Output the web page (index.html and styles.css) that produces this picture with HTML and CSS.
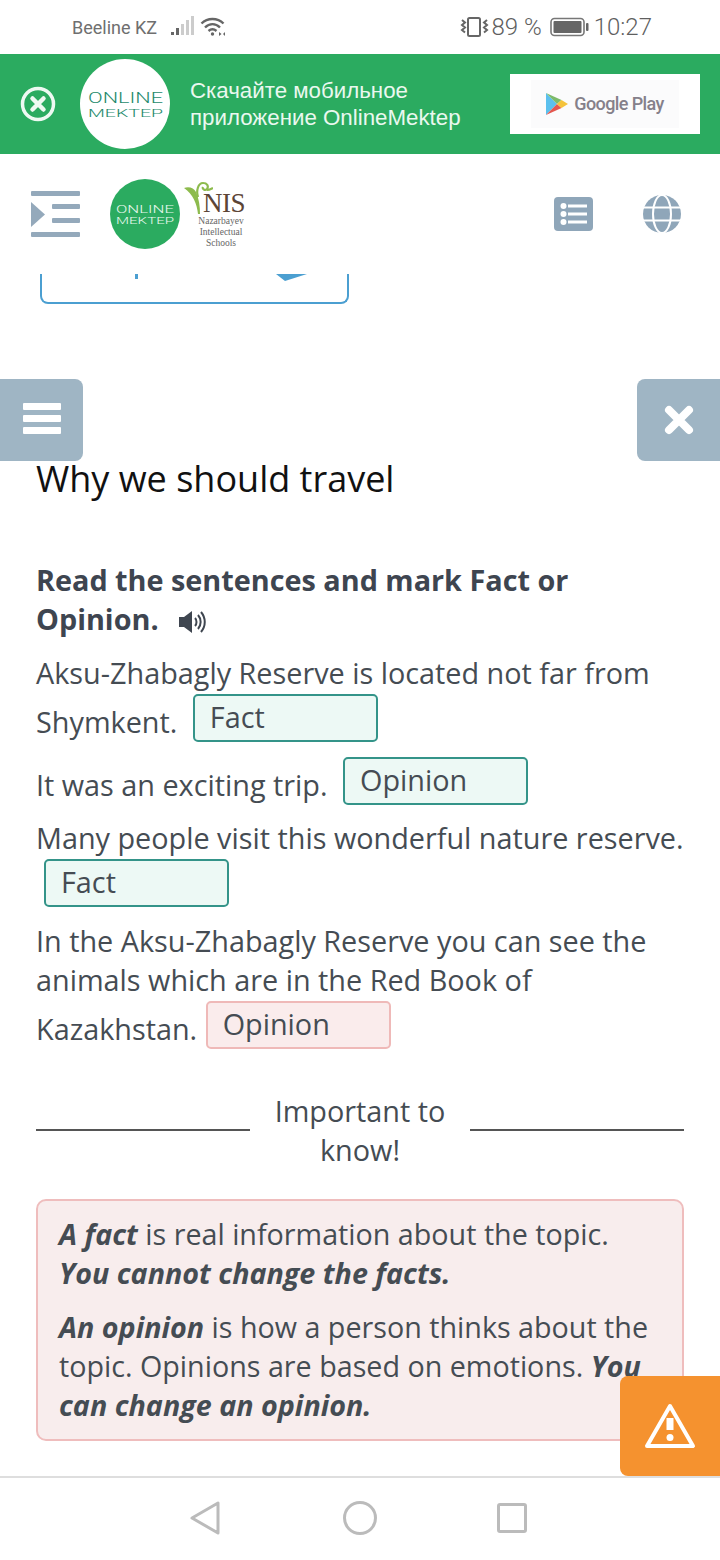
FILE: index.html
```html
<!DOCTYPE html>
<html lang="en">
<head>
<meta charset="utf-8">
<title>Why we should travel</title>
<link rel="stylesheet" href="styles.css">
</head>
<body>
<div class="phone">
  <header class="status">
    <div class="status-left">
      <span class="carrier">Beeline KZ</span>
      <svg class="signal" width="24" height="22" viewBox="0 0 24 22"><rect x="0" y="16" width="3" height="3" fill="#666"/><rect x="5" y="12" width="3" height="7" fill="#666"/><rect x="10" y="8" width="3" height="11" fill="#ccc"/><rect x="15" y="4" width="3" height="15" fill="#ccc"/><rect x="20" y="0" width="3" height="19" fill="#ccc"/></svg>
      <svg class="wifi" width="26" height="22" viewBox="0 0 26 22" fill="none" stroke="#666" stroke-width="2.4"><path d="M1.500 7.500C7.500 1.500 17.500 1.500 23.500 7.500"/><path d="M5 11.500C9.500 7 15.500 7 20 11.500"/><path d="M8.500 15C11 12.800 14 12.800 16.500 15"/><circle cx="12.500" cy="18" r="1.700" fill="#666" stroke="none"/><path d="M19 16l2.500 2-2.500 2zM25 16l-2 2 2 2z" fill="#666" stroke="none"/></svg>
    </div>
    <div class="status-right">
      <svg width="29" height="22" viewBox="0 0 29 22" fill="none" stroke="#666" stroke-width="2"><rect x="8" y="2" width="12" height="18" rx="1.500"/><path d="M2 4l3 2.500-3 2.500 3 2.500-3 2.500 3 2.500M27 4l-3 2.500 3 2.500-3 2.500 3 2.500-3 2.500"/></svg>
      <span class="pct">89 %</span>
      <svg width="40" height="20" viewBox="0 0 40 20"><rect x="1" y="1.500" width="33" height="17" rx="3.500" fill="none" stroke="#777" stroke-width="1.600"/><rect x="3.500" y="4" width="28" height="12" rx="1" fill="#666"/><rect x="36" y="6" width="2.500" height="8" rx="1" fill="#666"/></svg>
      <span class="clock">10:27</span>
    </div>
  </header>

  <section class="banner">
    <svg class="banner-close" width="36" height="36" viewBox="0 0 36 36"><circle cx="18" cy="18" r="15.500" fill="none" stroke="#eef9f2" stroke-width="3.500"/><path d="M12.500 12.500l11 11M23.500 12.500l-11 11" stroke="#eef9f2" stroke-width="4.500" stroke-linecap="round"/></svg>
    <svg class="banner-logo" width="90" height="90" viewBox="0 0 90 90"><circle cx="45" cy="45" r="45" fill="#fff"/><text x="8" y="43.500" textLength="75" lengthAdjust="spacingAndGlyphs" class="logo-a" fill="#1e8a6c">ONLINE</text><text x="8" y="57.500" textLength="75" lengthAdjust="spacingAndGlyphs" class="logo-b" fill="#1e8a6c">MEKTEP</text></svg>
    <p class="banner-text">Скачайте мобильное<br>приложение OnlineMektep</p>
    <div class="store">
      <div class="store-inner">
        <svg width="22" height="24" viewBox="0 0 22 24"><path d="M0 1L11 12 0 23z" fill="#5bc0ee"/><path d="M0 1L15.500 8 11 12z" fill="#7dba6a"/><path d="M0 23L15.500 16 11 12z" fill="#e4574f"/><path d="M15.500 8L22 12l-6.500 4L11 12z" fill="#f5c33b"/></svg>
        <span class="store-name">Google Play</span>
      </div>
    </div>
  </section>

  <nav class="topbar">
    <svg class="burger" width="50" height="48" viewBox="0 0 50 48" fill="#94a9bb"><rect x="1" y="1" width="49" height="5" rx="1"/><rect x="22" y="14" width="28" height="5" rx="1"/><rect x="22" y="28" width="28" height="5" rx="1"/><rect x="1" y="42" width="49" height="5" rx="1"/><path d="M1 12l14 12.500L1 37z"/></svg>
    <svg class="top-logo" width="70" height="70" viewBox="0 0 70 70"><circle cx="35" cy="35" r="35" fill="#2bab60"/><text x="6" y="33.500" textLength="58" lengthAdjust="spacingAndGlyphs" class="logo-c" fill="#e9f9ef">ONLINE</text><text x="6" y="44.500" textLength="58" lengthAdjust="spacingAndGlyphs" class="logo-d" fill="#e9f9ef">MEKTEP</text></svg>
    <div class="nis">
      <svg class="nis-sprout" width="30" height="34" viewBox="0 0 30 34"><path d="M1 7c5-2 10 0 12 4 3 7 4 14 4 22h-2C14 23 10 13 1 7z" fill="#8dbb4d"/><path d="M15 16C13 10 15 2 20 2c4 0 6 3 4 6-2 2-5 0-4-2M24 9c2 0 4-1 6-2" fill="none" stroke="#8dbb4d" stroke-width="2.200"/></svg>
      <span class="nis-mark">NIS</span>
      <span class="nis-sub">Nazarbayev<br>Intellectual<br>Schools</span>
    </div>
    <div class="top-actions">
      <svg width="39" height="34" viewBox="0 0 39 34"><rect width="39" height="34" rx="4" fill="#8fa6b9"/><g fill="#fff"><circle cx="9.500" cy="9" r="3"/><circle cx="9.500" cy="17" r="3"/><circle cx="9.500" cy="25" r="3"/><rect x="14" y="7.500" width="19" height="3"/><rect x="14" y="15.500" width="19" height="3"/><rect x="14" y="23.500" width="19" height="3"/></g></svg>
      <svg width="38" height="38" viewBox="0 0 38 38"><circle cx="19" cy="19" r="19" fill="#8fa6b9"/><g fill="none" stroke="#fff" stroke-width="2"><ellipse cx="19" cy="19" rx="9" ry="19"/><path d="M0 12.500h38M0 25.500h38"/></g></svg>
    </div>
  </nav>

  <main class="content">
    <div class="clipped-card"><i class="card-tick"></i><i class="card-arrow"></i></div>
    <button class="float-btn float-menu" aria-label="Menu"><i></i><i></i><i></i></button>
    <button class="float-btn float-close" aria-label="Close"><svg width="30" height="30" viewBox="0 0 30 30"><path d="M5 5l20 20M25 5L5 25" stroke="#fff" stroke-width="8" stroke-linecap="round"/></svg></button>

    <h1 class="title">Why we should travel</h1>

    <p class="task">Read the sentences and mark Fact or Opinion.
      <svg class="speaker" width="28" height="24" viewBox="0 0 28 24"><path d="M1 7h5l8-6v22l-8-6H1z" fill="#3f4650"/><g fill="none" stroke="#3f4650" stroke-width="2"><path d="M17 8c2 2 2 6 0 8"/><path d="M20 5c3.500 4 3.500 10 0 14"/><path d="M23 2c5 6 5 14 0 20"/></g></svg>
    </p>

    <p class="line line-first">Aksu-Zhabagly Reserve is located not far from Shymkent. <span class="answer ok">Fact</span></p>
    <p class="line line-tight">It was an exciting trip. <span class="answer ok">Opinion</span></p>
    <p class="line line-tight">Many people visit this wonderful nature reserve. <span class="answer ok">Fact</span></p>
    <p class="line">In the Aksu-Zhabagly Reserve you can see the animals which are in the Red Book of Kazakhstan. <span class="answer bad">Opinion</span></p>

    <div class="divider"><hr><span class="divider-text">Important to know!</span><hr></div>

    <aside class="note">
      <p><b><i>A fact</i></b> is real information about the topic. <b><i>You cannot change the facts.</i></b></p>
      <p><b><i>An opinion</i></b> is how a person thinks about the topic. Opinions are based on emotions. <b><i>You can change an opinion.</i></b></p>
    </aside>

    <button class="warn" aria-label="Warning"><svg width="52" height="48" viewBox="0 0 52 48"><path d="M26 4L49 44H3z" fill="none" stroke="#fff" stroke-width="4" stroke-linejoin="round"/><path d="M26 16v12" stroke="#fff" stroke-width="7"/><circle cx="26" cy="35.500" r="3.500" fill="#fff"/></svg></button>
  </main>

  <footer class="navbar">
    <svg width="30" height="34" viewBox="0 0 30 34"><path d="M28 2v30L2 17z" fill="none" stroke="#bbb" stroke-width="3" stroke-linejoin="round"/></svg>
    <svg width="34" height="34" viewBox="0 0 34 34"><circle cx="17" cy="17" r="15.500" fill="none" stroke="#bbb" stroke-width="3"/></svg>
    <svg width="30" height="30" viewBox="0 0 30 30"><rect x="1.500" y="1.500" width="27" height="27" rx="1.500" fill="none" stroke="#bbb" stroke-width="3"/></svg>
  </footer>
</div>
</body>
</html>
```

FILE: styles.css
```css
* { box-sizing: border-box; }
html, body { margin: 0; padding: 0; background: #fff; }
p, h1 { margin: 0; }

.phone {
  width: 720px;
  height: 1560px;
  display: flex;
  flex-direction: column;
  overflow: hidden;
  font-family: "Open Sans", sans-serif;
}

/* status bar */
.status {
  flex: 0 0 54px;
  display: flex;
  align-items: center;
  justify-content: space-between;
  padding: 0 68px 0 72px;
  font-family: Roboto, sans-serif;
  color: #6f6f6f;
}
.status-left, .status-right { display: flex; align-items: center; }
.carrier { font-size: 18px; margin-right: 14px; }
.wifi { margin-left: 5px; }
.status-right { gap: 2px; font-size: 24px; font-weight: 300; color: #5f5f5f; }
.status-right .pct { margin-right: 6px; }
.status-right .clock { margin-left: 2px; }

/* banner */
.banner {
  flex: 0 0 100px;
  background: #2bab60;
  display: flex;
  align-items: center;
  padding-left: 20px;
}
.banner-logo { margin-left: 24px; }
.logo-a { font: 300 14px Roboto, sans-serif; }
.logo-b { font: 300 11.500px Roboto, sans-serif; }
.logo-c { font: 300 11px Roboto, sans-serif; }
.logo-d { font: 300 9px Roboto, sans-serif; }
.banner-text {
  margin-left: 20px;
  width: 320px;
  font: 22.300px/27px "Liberation Sans", sans-serif;
  color: #eaf8ef;
  white-space: nowrap;
}
.store {
  width: 190px;
  height: 60px;
  background: #fff;
  display: flex;
  justify-content: center;
  align-items: center;
}
.store-inner {
  width: 148px;
  height: 48px;
  background: #fbfbfc;
  display: flex;
  align-items: center;
  justify-content: center;
  gap: 6px;
}
.store-name { font: 500 18px/1 Roboto, sans-serif; color: #85808a; letter-spacing: -.6px; }

/* top navigation */
.topbar {
  flex: 0 0 120px;
  display: flex;
  align-items: center;
  padding-left: 30px;
}
.top-logo { margin-left: 30px; }
.nis {
  position: relative;
  width: 62px;
  height: 70px;
  margin-left: 3px;
  display: flex;
  flex-direction: column;
  align-items: center;
  justify-content: flex-end;
}
.nis-sprout { position: absolute; left: 0; top: 2px; }
.nis-mark { font: 27px/26px "Liberation Serif", serif; color: #5c4536; align-self: flex-end; letter-spacing: -.5px; }
.nis-sub { font: 9.500px/11px "Liberation Serif", serif; color: #666; text-align: center; padding-left: 14px; white-space: nowrap; }
.top-actions {
  margin-left: auto;
  padding-right: 39px;
  display: flex;
  align-items: center;
  gap: 50px;
}

/* content */
.content {
  flex: 1;
  position: relative;
  overflow: hidden;
  padding: 0 36px;
  color: #454c53;
  font-size: 28.800px;
  line-height: 39px;
}
.clipped-card {
  position: relative;
  width: 309px;
  height: 30px;
  margin-left: 4px;
  border: 2px solid #4b9fd1;
  border-top: 0;
  border-radius: 0 0 8px 8px;
}
.card-tick { position: absolute; left: 93px; top: 0; width: 3px; height: 5px; background: #4b9fd1; }
.card-arrow {
  position: absolute;
  left: 234px;
  top: 0;
  border-top: 7px solid #4b9fd1;
  border-left: 9px solid transparent;
  border-right: 22px solid transparent;
}
.float-btn {
  position: absolute;
  top: 105px;
  width: 83px;
  height: 82px;
  border: 0;
  padding: 0;
  background: #9fb5c4;
  display: flex;
  flex-direction: column;
  align-items: center;
  justify-content: center;
}
.float-menu { left: 0; gap: 5px; padding-bottom: 3px; border-radius: 0 8px 8px 0; }
.float-menu i { display: block; width: 38px; height: 7px; background: #fff; border-radius: 1px; }
.float-close { right: 0; border-radius: 8px 0 0 8px; }

.title {
  margin-top: 153px;
  font-size: 36px;
  line-height: 44px;
  font-weight: 400;
  color: #111;
}
.task { margin-top: 59px; font-weight: 700; color: #3e4550; }
.speaker { vertical-align: -4px; margin-left: 12px; }
.line { margin-top: 14px; }
.line-first { margin-top: 15px; }
.line-tight { margin-top: 13px; }
.answer {
  display: inline-block;
  width: 185px;
  height: 48px;
  margin: 2px 9px 0 8px;
  padding: 0 15px;
  border: 2px solid;
  border-radius: 5px;
  line-height: 42px;
  vertical-align: 5px;
}
.ok { border-color: #349489; background: #edf9f5; }
.bad { margin-left: 1px; border-color: #efb9b8; background: #faecec; }

.divider {
  display: flex;
  align-items: center;
  margin-top: 42px;
}
.divider hr { flex: 1; margin: 0; border: 0; border-top: 2px solid #555; }
.divider-text { width: 220px; padding: 0 20px; text-align: center; }

.note {
  margin-top: 30px;
  padding: 13px 21px 15px;
  font-size: 28.700px;
  background: #f8eded;
  border: 2px solid #efbdbd;
  border-radius: 10px;
}
.note p + p { margin-top: 15px; }

.warn {
  position: absolute;
  right: 0;
  bottom: 0;
  width: 100px;
  height: 100px;
  border: 0;
  padding: 0;
  background: #f5922f;
  border-radius: 8px 0 0 8px;
  display: flex;
  align-items: center;
  justify-content: center;
}

/* android nav */
.navbar {
  flex: 0 0 84px;
  border-top: 2px solid #dedede;
  padding: 0 0 2px 190px;
  display: flex;
  align-items: center;
}
.navbar svg + svg { margin-left: 123px; }
.navbar svg + svg + svg { margin-left: 120px; }
```
